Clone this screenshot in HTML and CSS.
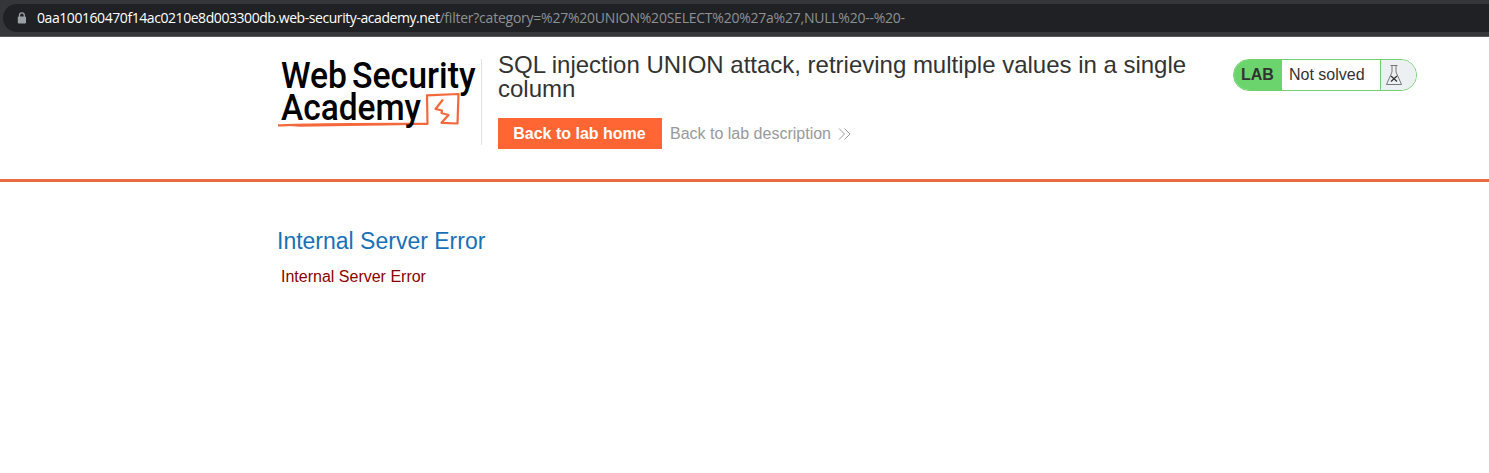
FILE: index.html
```html
<!DOCTYPE html>
<html lang="en">
<head>
<meta charset="utf-8">
<title>SQL injection UNION attack</title>
<link rel="stylesheet" href="styles.css">
</head>
<body>
<div class="toolbar">
  <div class="omnibox">
    <svg class="lock" width="10" height="13" viewBox="0 0 10 13"><path d="M2.5 5V3.2a2.3 2.3 0 0 1 4.8 0V5" fill="none" stroke="#9aa0a6" stroke-width="1.3"/><rect x="0.8" y="4.6" width="8.2" height="7" rx="1" fill="#9aa0a6"/></svg>
    <span class="host">0aa100160470f14ac0210e8d003300db.web-security-academy.net</span><span class="path">/filter?category=%27%20UNION%20SELECT%20%27a%27,NULL%20--%20-</span>
  </div>
</div>
<header class="lab-header">
  <svg class="logo" width="205" height="80" viewBox="277 55 205 80">
    <g class="logo-text">
      <text x="281" y="87.5" textLength="66" lengthAdjust="spacingAndGlyphs">Web</text>
      <text x="352" y="87.5" textLength="123.5" lengthAdjust="spacingAndGlyphs">Security</text>
      <path d="M278 125.4C310 123.6 370 123.8 427.5 123.8L427 95.3L458.5 94L457.5 123.5L441.5 122.8L448.5 115L441.5 113L442 110.5L435.5 109L443 99.5" fill="none" stroke="#f4693c" stroke-width="2.2" stroke-linejoin="round"/>
      <path d="M278 125L345 124.2L427 124.8L300 126.7Z" fill="#f4693c"/>
      <text x="281" y="120" textLength="140" lengthAdjust="spacingAndGlyphs">Academy</text>
    </g>
  </svg>
  <div class="title-block">
    <h1>SQL injection UNION attack, retrieving multiple values in a single<br>column</h1>
    <div class="links">
      <a class="button">Back to lab home</a>
      <a class="description">Back to lab description</a>
      <svg class="chevrons" width="14" height="12" viewBox="0 0 14 12"><path d="M1 .5L6.5 6L1 11.5M6.5 .5L12 6L6.5 11.5" fill="none" stroke="#999" stroke-width="1"/></svg>
    </div>
  </div>
  <div class="status">
    <span class="lab">LAB</span>
    <span class="state">Not solved</span>
    <span class="flask"><svg width="18" height="22" viewBox="0 0 18 22"><path d="M5.5 1.5H12.5M7 1.5V8L1.5 20.5H16.5L11 8V1.5" fill="none" stroke="#777" stroke-width="1"/><path d="M6 12L12 17.5M12 12L6 17.5" stroke="#333" stroke-width="1.3"/></svg></span>
  </div>
</header>
<main>
  <h2>Internal Server Error</h2>
  <p class="warning">Internal Server Error</p>
</main>
</body>
</html>
```
FILE: styles.css
```css
* { box-sizing: border-box; }
body { margin: 0; height: 473px; overflow: hidden; background: #fff; font-family: "Liberation Sans", Arial, sans-serif; color: #333332; }
.toolbar { height: 37px; padding: 4px 0 0 3px; background: #35363a; border-bottom: 1px solid #55565a; }
.omnibox { height: 28px; display: flex; align-items: center; padding-left: 14px; background: #202124; border-radius: 14px 0 0 14px; font: 14px/28px "Open Sans", sans-serif; white-space: nowrap; }
.lock { margin-right: 10px; }
.host { color: #fff; letter-spacing: -0.435px; }
.path { color: #8d9196; letter-spacing: -0.235px; }
.lab-header { height: 145px; border-bottom: 3px solid #e96b3f; display: flex; align-items: flex-start; padding: 18px 0 0 277px; }
.logo { flex: none; display: block; overflow: visible; }
.logo-text { font-family: Roboto, sans-serif; font-size: 37.5px; font-weight: 500; fill: #000; }
.title-block { width: 752px; height: 86px; margin-top: 4px; margin-left: -1px; padding-left: 16px; border-left: 1px solid #e2e2e2; }
h1 { margin: -6px 0 0; font-size: 24px; line-height: 24px; font-weight: 400; letter-spacing: -0.01px; white-space: nowrap; }
.links { display: flex; align-items: center; margin-top: 17px; font-size: 16px; line-height: 31px; }
.button { width: 164px; height: 31px; padding-right: 1px; background: #ff6633; color: #fff; font-weight: 700; text-align: center; }
.description { margin-left: 8px; color: #999; white-space: nowrap; }
.chevrons { margin-left: 7px; }
.status { display: flex; width: 184px; height: 32px; margin-top: 4px; border: 1px solid #70cf6e; border-radius: 16px; overflow: hidden; font-size: 16px; line-height: 30px; }
.lab { width: 48px; padding-left: 7px; background: #6cd46c; font-weight: 700; }
.state { width: 98px; padding-left: 7px; }
.flask { flex: 1; border-left: 1px solid #70cf6e; background: #ecf0f3; display: flex; align-items: center; padding-left: 4px; }
main { padding: 45px 0 0 277px; }
h2 { margin: 0; font-size: 23px; line-height: 28px; font-weight: 400; color: #1871b8; }
.warning { margin: 12px 0 0 4px; font-size: 16px; line-height: 20px; color: #8b0000; }
```
